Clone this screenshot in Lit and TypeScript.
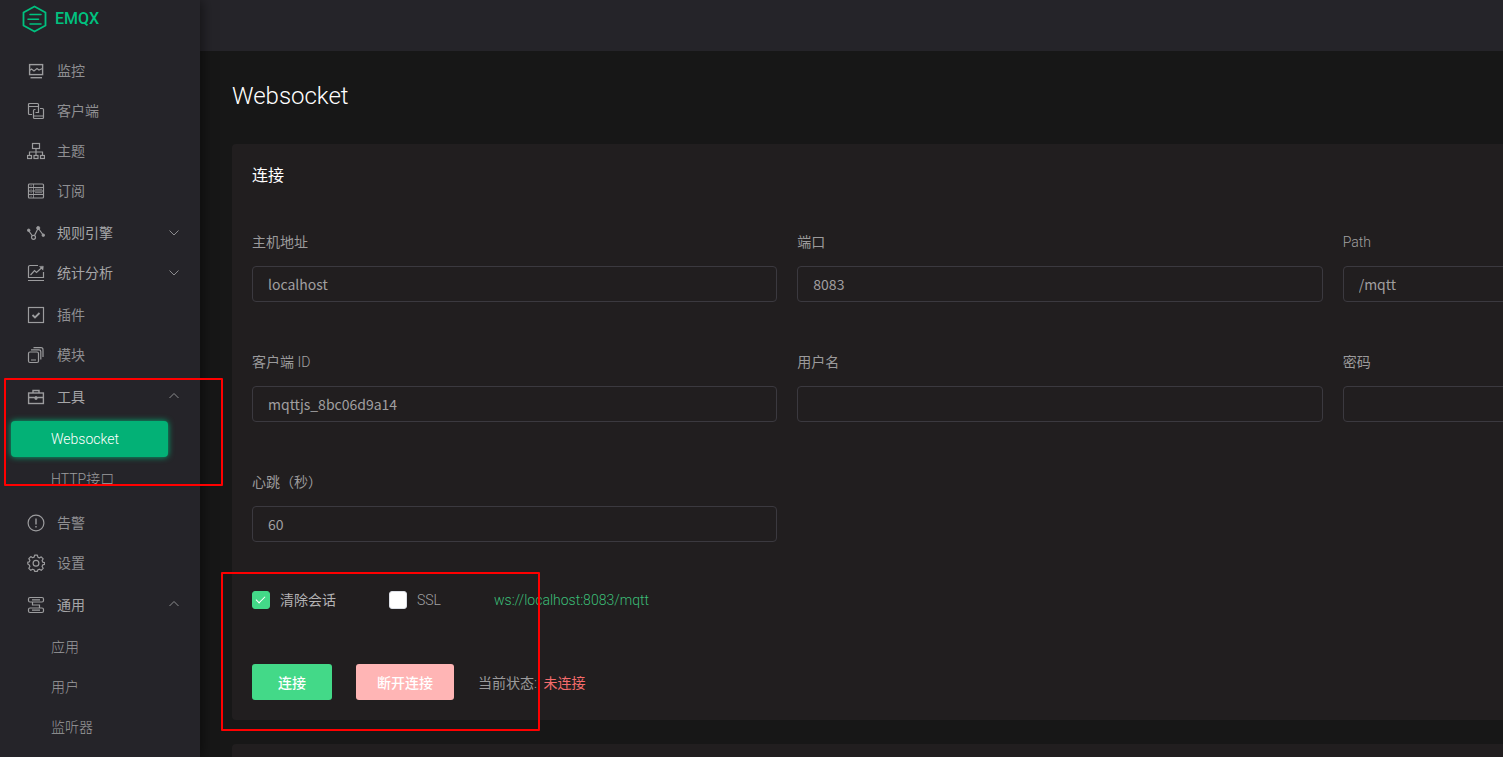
import { LitElement, html, css, svg, type SVGTemplateResult } from "lit";
import { customElement, state } from "lit/decorators.js";
import { classMap } from "lit/directives/class-map.js";

interface MenuEntry {
  label: string;
  icon: string;
  children?: string[];
  open?: boolean;
}

interface Field {
  id: string;
  label: string;
  suffix?: string;
  latin?: boolean;
  value: string;
  type?: string;
}

const ICONS: Record<string, SVGTemplateResult> = {
  monitor: svg`<rect x="2.600" y="2.600" width="13" height="10" stroke-width="1.400"/><path d="M2.500 8.500l2-1.500 2.500 2 3-2.500 2 1.500 3.500-1.500"/><path d="M3.500 15.700h11.500" stroke-width="1.400"/>`,
  clients: svg`<path d="M5 12.500H2.500a1 1 0 0 1-1-1v-9a1 1 0 0 1 1-1h8a1 1 0 0 1 1 1V6M1.500 4.500h10"/><path d="M8.500 7.500h-1a1 1 0 0 0-1 1v7a1 1 0 0 0 1 1h8a1 1 0 0 0 1-1v-8a1 1 0 0 0-1-1H13M6.500 14h10M11.500 6v4.500H8.500"/>`,
  topics: svg`<rect x="5.500" y="1.500" width="7" height="5"/><path d="M9 6.500v7M2.500 13.500V10h13v3.500"/><rect x="0.500" y="13.500" width="4" height="3"/><rect x="7" y="13.500" width="4" height="3"/><rect x="13.500" y="13.500" width="4" height="3"/>`,
  subscriptions: svg`<rect x="1.500" y="2" width="15" height="14" rx="1"/><path d="M1.500 5.500h15M1.500 9h15M1.500 12.500h15" stroke-width="1.200"/><path d="M6.500 2v14" stroke-width="0.800"/><path d="M3.500 7.200h1.200M3.500 10.700h1.200M3.500 3.800h1.200M3.500 14.200h1.200M8 7.200h7M8 10.700h7" stroke-width="0.800"/>`,
  rules: svg`<path d="M1.500 6.500l4 5.500M7.500 11.500L11 4.500M11.800 5l4.400 6"/><circle cx="1.700" cy="6.300" r="1.300" fill="currentColor" stroke-width="0.800"/><circle cx="6.500" cy="13.300" r="2"/><circle cx="11.200" cy="4" r="1.600" fill="currentColor" stroke-width="0.800"/><circle cx="16.300" cy="11.200" r="1.300" fill="currentColor" stroke-width="0.800"/>`,
  analysis: svg`<path d="M11 1.500H3a1.500 1.500 0 0 0-1.500 1.500v10.500h15V8M1 16.500h16"/><path d="M3.500 11l4-4.500 2 2L15 3.500"/><path d="M12.500 2.500l3.800-.3-.3 4z" fill="currentColor" stroke-width="0.500"/>`,
  plugins: svg`<rect x="1.500" y="1.500" width="15" height="15"/><path d="M5.500 9l2.500 2.500L12.500 7" stroke-width="1.800"/>`,
  modules: svg`<rect x="1.500" y="6" width="10" height="10.500" rx="1.500"/><path d="M4 3.800h8a1.800 1.800 0 0 1 1.800 1.800V13.500M6.500 1.700h7.500a2 2 0 0 1 2 2V11M4 14h5"/>`,
  tools: svg`<rect x="1.600" y="5" width="14.800" height="10.500" stroke-width="1.400"/><path d="M6 5V2.500h6V5M1.500 9.500h15M9 8v4M7.500 10.500h3" stroke-width="1.400"/>`,
  alarms: svg`<circle cx="9" cy="9" r="7.900"/><path d="M9 4.500v6M9 12v1.500" stroke-width="1.400"/>`,
  settings: svg`<path d="M7.600 1.200h2.800l.5 2 1.500.7 1.800-1.100 2 2-1.100 1.800.6 1.500 1.900.5v1.800l-1.900.5-.6 1.600 1.100 1.800-2 2-1.800-1.100-1.500.6-.5 1.500H7.600l-.5-1.500-1.500-.6-1.800 1.100-2-2 1.100-1.800-.6-1.600L.8 10V8.200l1.500-.3.600-1.500-1.100-1.800 2-2 1.800 1.100 1.500-.6z" stroke-linejoin="round"/><circle cx="9" cy="9.200" r="2.900"/>`,
  general: svg`<rect x="1.500" y="1.500" width="15" height="4.500" rx="1.500"/><rect x="1.500" y="12" width="15" height="4.500" rx="1.500"/><path d="M5 3.800h8M5 14.200h8M5.500 6v3h7v3"/>`,
};

const MENU: MenuEntry[] = [
  { label: "监控", icon: "monitor" },
  { label: "客户端", icon: "clients" },
  { label: "主题", icon: "topics" },
  { label: "订阅", icon: "subscriptions" },
  { label: "规则引擎", icon: "rules", children: [] },
  { label: "统计分析", icon: "analysis", children: [] },
  { label: "插件", icon: "plugins" },
  { label: "模块", icon: "modules" },
  { label: "工具", icon: "tools", children: ["Websocket", "HTTP接口"], open: true },
  { label: "告警", icon: "alarms" },
  { label: "设置", icon: "settings" },
  { label: "通用", icon: "general", children: ["应用", "用户", "监听器"], open: true },
];

const FIELDS: Field[] = [
  { id: "host", label: "主机地址", value: "localhost" },
  { id: "port", label: "端口", value: "8083" },
  { id: "path", label: "Path", latin: true, value: "/mqtt" },
  { id: "client", label: "客户端", suffix: " ID", value: "mqttjs_8bc06d9a14" },
  { id: "user", label: "用户名", value: "" },
  { id: "password", label: "密码", value: "", type: "password" },
  { id: "keepalive", label: "心跳（秒）", value: "60" },
];

@customElement("side-menu")
class SideMenu extends LitElement {
  static styles = css`
    :host {
      display: block;
      box-sizing: border-box;
      width: 200px;
      flex: none;
      background: #252429;
      box-shadow: 2px 0 12px rgba(0, 0, 0, 0.5);
      z-index: 2;
      overflow: hidden;
    }
    .brand {
      display: flex;
      align-items: center;
      gap: 8px;
      height: 38px;
      margin-bottom: 11px;
      padding-left: 22px;
      color: #00c17f;
      font: 500 16px/24px Roboto, sans-serif;
      text-decoration: none;
    }
    .logo {
      width: 25px;
      height: 28px;
      fill: none;
      stroke: currentColor;
    }
    .menu,
    .submenu {
      list-style: none;
      margin: 0;
      padding: 0;
      display: flow-root;
    }
    .item {
      display: flex;
      align-items: center;
      gap: 12px;
      height: 36px;
      margin: 4px 32px 4px 11px;
      padding-left: 16px;
      border-radius: 4px;
      color: #9c9c9e;
      text-decoration: none;
    }
    .title {
      display: flex;
      align-items: center;
      gap: 12px;
      box-sizing: border-box;
      width: 100%;
      height: 40px;
      padding: 0 21px 0 27px;
      border: 0;
      background: none;
      font: inherit;
      text-align: left;
      cursor: pointer;
    }
    .child {
      padding-left: 40px;
    }
    .active {
      background: #03b176;
      color: #fff;
      box-shadow: 0 0 6px #03b176;
    }
    .icon {
      width: 18px;
      height: 18px;
      flex: none;
      fill: none;
      stroke: currentColor;
      stroke-width: 1.2;
      color: #9c9c9e;
    }
    .name {
      flex: 1;
      font-weight: 400;
      color: #a6a6a8;
    }
    .text {
      font-weight: 400;
      color: #8f8f92;
    }
    .arrow {
      width: 10px;
      height: 10px;
      fill: none;
      stroke: #8c8c8f;
    }
  `;

  render() {
    return html`
      <a class="brand" href="#">
        <svg class="logo" viewBox="0 0 25 28" aria-hidden="true">
          <path d="M12.500 1.500L23.500 7.500v13L12.500 26.500 1.500 20.500v-13z" stroke-width="1.800" stroke-linejoin="round" />
          <path d="M8 9.500h11M6 14.200h10.500M8 19h11" stroke-width="1.600" stroke-linecap="round" />
        </svg>
        <span>EMQX</span>
      </a>
      <nav>
        <ul class="menu">
          ${MENU.map((m) => html`<li>${m.children ? this.group(m) : this.link(m)}</li>`)}
        </ul>
      </nav>
    `;
  }

  private icon(name: string) {
    return html`<svg class="icon" viewBox="0 0 18 18" aria-hidden="true">${ICONS[name]}</svg>`;
  }

  private link(m: MenuEntry) {
    return html`<a class="item" href="#">${this.icon(m.icon)}<span class="text">${m.label}</span></a>`;
  }

  private group(m: MenuEntry) {
    return html`
      <button class="title" type="button" aria-expanded=${m.open ? "true" : "false"}>
        ${this.icon(m.icon)}<span class="name">${m.label}</span>
        <svg class="arrow" viewBox="0 0 10 10" aria-hidden="true">
          <path d=${m.open ? "M0.500 6L5 1.500l4.500 4.500" : "M0.500 2.500L5 7l4.500-4.500"} />
        </svg>
      </button>
      ${m.open
        ? html`<ul class="submenu">
            ${m.children!.map(
              (c) => html`<li><a class=${classMap({ item: true, child: true, active: c === "Websocket" })} href="#">${c}</a></li>`,
            )}
          </ul>`
        : ""}
    `;
  }
}

@customElement("connect-card")
class ConnectCard extends LitElement {
  @state() private clean = true;
  @state() private ssl = false;

  static styles = css`
    :host {
      display: block;
      padding: 20px;
      border-radius: 4px;
      background: #211e1f;
    }
    .heading {
      margin: 0 0 44px;
      font-size: 16px;
      line-height: 24px;
      font-weight: 400;
      color: #fff;
    }
    .fields {
      display: grid;
      grid-template-columns: repeat(3, 1fr);
      gap: 50px 20px;
    }
    .field {
      display: flex;
      flex-direction: column;
      gap: 14px;
    }
    .label {
      line-height: 20px;
      font-weight: 400;
      color: #9b9a9b;
    }
    .latin {
      font-weight: 300;
      color: #a2a1a2;
    }
    .input {
      box-sizing: border-box;
      width: 100%;
      height: 36px;
      padding: 0 15px;
      border: 1px solid #3b393f;
      border-radius: 4px;
      outline: 0;
      background: transparent;
      color: #a09fa0;
      font: 400 14px "Noto Sans CJK SC", sans-serif;
    }
    .options {
      display: flex;
      align-items: center;
      gap: 53px;
      height: 20px;
      margin: 48px 0 54px;
    }
    .option {
      display: flex;
      align-items: center;
      gap: 10px;
    }
    .checked {
      font-weight: 400;
      color: #b4b3b4;
    }
    .check {
      position: relative;
      appearance: none;
      box-sizing: border-box;
      width: 18px;
      height: 18px;
      margin: 0;
      border: 1px solid #dcdfe6;
      border-radius: 3px;
      background: #fff;
    }
    .check:checked {
      border-color: #43d988;
      background: #43d988;
    }
    .check:checked::after {
      content: "";
      position: absolute;
      left: 3px;
      top: 4px;
      width: 8px;
      height: 4px;
      border: solid #fff;
      border-width: 0 0 1px 1px;
      transform: rotate(-45deg);
    }
    .url {
      color: #3cbe78;
    }
    .actions {
      display: flex;
      align-items: center;
      gap: 24px;
    }
    .button {
      min-width: 80px;
      height: 36px;
      padding: 0 21px;
      border: 0;
      border-radius: 3px;
      background: #43d988;
      color: #fff;
      font: 500 14px Roboto, "Noto Sans CJK SC", sans-serif;
      cursor: pointer;
    }
    .danger {
      background: #ffb5b5;
      cursor: not-allowed;
    }
    .status {
      padding-top: 2px;
      font-weight: 400;
      color: #9b9a9b;
    }
    .state {
      margin-left: 3px;
      color: #f56c6c;
    }
  `;

  render() {
    return html`
      <h2 class="heading">连接</h2>
      <div class="fields">
        ${FIELDS.map(
          (f) => html`<div class="field">
            <label class=${classMap({ label: true, latin: !!f.latin })} for=${f.id}
              >${f.label}${f.suffix ? html`<span class="latin">${f.suffix}</span>` : ""}</label
            >
            <input class="input" id=${f.id} type=${f.type ?? "text"} .value=${f.value} autocomplete="off" />
          </div>`,
        )}
      </div>
      <div class="options">
        <label class=${classMap({ option: true, checked: this.clean })}>
          <input class="check" type="checkbox" .checked=${this.clean} @change=${() => (this.clean = !this.clean)} />清除会话
        </label>
        <label class=${classMap({ option: true, checked: this.ssl })}>
          <input class="check" type="checkbox" .checked=${this.ssl} @change=${() => (this.ssl = !this.ssl)} />SSL
        </label>
        <span class="url">ws://localhost:8083/mqtt</span>
      </div>
      <div class="actions">
        <button class="button" type="button">连接</button>
        <button class="button danger" type="button">断开连接</button>
        <span class="status">当前状态<span class="latin">:</span> <span class="state">未连接</span></span>
      </div>
    `;
  }
}

@customElement("app-root")
class AppRoot extends LitElement {
  static styles = css`
    :host {
      position: relative;
      display: flex;
      height: 100vh;
      overflow: hidden;
      background: #171717;
      color: #a2a1a2;
      font: 300 14px/20px Roboto, "Noto Sans CJK SC", sans-serif;
    }
    .main {
      flex: 1;
      min-width: 0;
      overflow: hidden;
    }
    .topbar {
      height: 51px;
      background: #252429;
    }
    .page {
      box-sizing: border-box;
      min-width: 1720px;
      padding: 28px 32px;
    }
    .page-title {
      margin: 0 0 31px;
      font-size: 24px;
      line-height: 34px;
      font-weight: 300;
      color: #fff;
    }
    .next-card {
      height: 200px;
      margin-top: 24px;
      border-radius: 4px;
      background: #211e1f;
    }
    .mark {
      position: absolute;
      box-sizing: border-box;
      border: 2px solid #ff0000;
      border-radius: 1px;
      z-index: 3;
      pointer-events: none;
    }
    .mark-menu {
      left: 4px;
      top: 378px;
      width: 219px;
      height: 108px;
    }
    .mark-form {
      left: 221px;
      top: 572px;
      width: 319px;
      height: 159px;
    }
  `;

  render() {
    return html`
      <side-menu></side-menu>
      <div class="main">
        <header class="topbar"></header>
        <main class="page">
          <h1 class="page-title">Websocket</h1>
          <connect-card></connect-card>
          <section class="next-card"></section>
        </main>
      </div>
      <div class="mark mark-menu"></div>
      <div class="mark mark-form"></div>
    `;
  }
}
